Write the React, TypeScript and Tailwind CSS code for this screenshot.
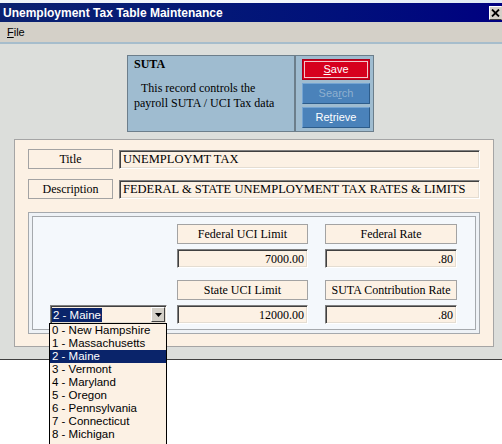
import React from "react";

const serif = "font-['Liberation_Serif','Times_New_Roman',serif]";
const sans = "font-['Liberation_Sans',Arial,sans-serif]";

const sunken =
  "border border-t-[#808080] border-l-[#808080] border-b-white border-r-white shadow-[inset_1px_1px_0_#404040,inset_-1px_-1px_0_#e4ddd2] bg-[#fcf1e4]";

function LabelBox({ text, className = "" }: { text: string; className?: string }) {
  return (
    <div
      className={`h-[20px] border border-[#a3a3a3] bg-[#fcf1e4] flex items-center justify-center text-[12px] text-black ${serif} ${className}`}
    >
      {text}
    </div>
  );
}

function ValueBox({ value, className = "" }: { value: string; className?: string }) {
  return (
    <div className={`h-[19px] ${sunken} flex items-center justify-end pr-[3px] text-[12px] text-black ${serif} ${className}`}>
      {value}
    </div>
  );
}

const states = [
  "0 - New Hampshire",
  "1 - Massachusetts",
  "2 - Maine",
  "3 - Vermont",
  "4 - Maryland",
  "5 - Oregon",
  "6 - Pennsylvania",
  "7 - Connecticut",
  "8 - Michigan",
];

export default function App() {
  return (
    <div className="w-[502px] h-[444px] bg-white relative overflow-hidden">
      {/* window chrome */}
      <div className="h-[3px] bg-gradient-to-r from-[#eef3f8] via-[#f4f8fc] to-[#dfe9f3]" />
      <div className="h-[19px] bg-gradient-to-r from-[#0b2170] to-[#000080] flex items-center justify-between pl-[3px]">
        <span className={`text-white font-bold text-[12px] ${sans}`}>
          Unemployment Tax Table Maintenance
        </span>
        <div className="w-[13px] h-[14px] bg-[#d4d0c8] border border-t-white border-l-white border-b-[#404040] border-r-[#d4d0c8] flex items-center justify-center">
          <svg width="9" height="8" viewBox="0 0 9 8">
            <path d="M1 0.5 L8 7.5 M8 0.5 L1 7.5" stroke="black" strokeWidth="1.8" />
          </svg>
        </div>
      </div>
      <div className="h-[20px] bg-[#d4d0c8] flex items-center pl-[7px]">
        <span className={`text-[11px] text-black ${sans}`}>
          <span className="underline">F</span>ile
        </span>
      </div>
      <div className="h-[2px] bg-[#a6bdcc]" />

      {/* window body */}
      <div className="h-[316px] bg-[#dcdedb] pt-[11px] border-b border-[#404040]">
        {/* SUTA header panel */}
        <div className="ml-[127px] w-[247px] h-[77px] bg-[#9fbcd0] border border-[#6c7e8b] flex">
          <div className={`w-[166px] pl-[6px] pt-[1px] text-[12px] text-black ${serif}`}>
            <div className="font-bold leading-[15px]">SUTA</div>
            <div className="mt-[9px] leading-[15px] indent-[7px]">This record controls the</div>
            <div className="leading-[14px]">payroll SUTA / UCI Tax data</div>
          </div>
          <div className="w-[2px] bg-[#6c7e8b]" />
          <div className="flex-1 pl-[6px] pt-[3px] flex flex-col gap-[3px]">
            <div className="w-[68px] h-[21px] bg-[#d6001e] border border-[#a8001a] p-[1px]">
              <div className={`h-full border border-[#f0c8cc] flex items-center justify-center text-white text-[11px] ${sans}`}>
                <span className="underline">S</span>ave
              </div>
            </div>
            <div
              className={`w-[68px] h-[21px] bg-[#4a82ba] border border-t-[#74a4d2] border-l-[#74a4d2] border-b-[#2d5c8a] border-r-[#2d5c8a] flex items-center justify-center text-[11px] text-[#8fb0cf] ${sans}`}
            >
              Sea<span className="underline">r</span>ch
            </div>
            <div
              className={`w-[68px] h-[21px] bg-[#4a82ba] border border-t-[#74a4d2] border-l-[#74a4d2] border-b-[#2d5c8a] border-r-[#2d5c8a] flex items-center justify-center text-[11px] text-white ${sans}`}
            >
              Re<span className="underline">t</span>rieve
            </div>
          </div>
        </div>

        {/* main form panel */}
        <div className="mt-[7px] ml-[14px] w-[480px] h-[208px] border border-[#a5a5a5] bg-[#fcf1e4] px-[13px] pt-[9px]">
          <div className="flex items-center gap-[6px]">
            <LabelBox text="Title" className="w-[85px]" />
            <div className={`flex-1 h-[19px] ${sunken} flex items-center pl-[3px] text-[12.5px] text-black ${serif}`}>
              UNEMPLOYMT TAX
            </div>
          </div>
          <div className="flex items-center gap-[6px] mt-[10px]">
            <LabelBox text="Description" className="w-[85px]" />
            <div className={`flex-1 h-[19px] ${sunken} flex items-center pl-[3px] text-[12.5px] text-black ${serif}`}>
              FEDERAL &amp; STATE UNEMPLOYMENT TAX RATES &amp; LIMITS
            </div>
          </div>

          {/* rates panel */}
          <div className="mt-[13px] border border-[#a5a9ad] bg-[#eef2f6] p-[3px]">
            <div className="h-[114px] border border-[#a5a9ad] bg-[#f4f8fc] pl-[17px] pt-[7px]">
              <div className="flex">
                <div className="w-[117px]" />
                <LabelBox text="Federal UCI Limit" className="w-[131px] ml-[10px]" />
                <LabelBox text="Federal Rate" className="w-[132px] ml-[17px]" />
              </div>
              <div className="flex mt-[5px]">
                <div className="w-[117px]" />
                <ValueBox value="7000.00" className="w-[131px] ml-[10px]" />
                <ValueBox value=".80" className="w-[132px] ml-[17px]" />
              </div>
              <div className="flex mt-[12px]">
                <div className="w-[117px]" />
                <LabelBox text="State UCI Limit" className="w-[131px] ml-[10px]" />
                <LabelBox text="SUTA Contribution Rate" className="w-[132px] ml-[17px]" />
              </div>
              <div className="flex mt-[5px]">
                <div className={`w-[117px] h-[19px] ${sunken} flex items-center justify-between pl-[1px] pr-[1px]`}>
                  <span className={`bg-[#0a246a] text-white text-[11.5px] leading-[14px] px-[1px] ${sans}`}>2 - Maine</span>
                  <div className="w-[14px] h-[15px] bg-[#d4d0c8] border border-t-white border-l-white border-b-[#404040] border-r-[#404040] flex items-center justify-center">
                    <svg width="7" height="4" viewBox="0 0 7 4">
                      <path d="M0 0 H7 L3.5 4 Z" fill="black" />
                    </svg>
                  </div>
                </div>
                <ValueBox value="12000.00" className="w-[131px] ml-[10px]" />
                <ValueBox value=".80" className="w-[132px] ml-[17px]" />
              </div>
            </div>
          </div>
        </div>
      </div>

      {/* open dropdown list */}
      <div className="absolute left-[49px] top-[323px] w-[118px] h-[130px] border border-black bg-[#fcf1e4]">
        {states.map((s, i) => (
          <div
            key={s}
            className={`h-[13px] leading-[13px] pl-[2px] text-[11.5px] ${sans} ${
              i === 2 ? "bg-[#0a246a] text-white" : "text-black"
            }`}
          >
            {s}
          </div>
        ))}
      </div>
    </div>
  );
}
